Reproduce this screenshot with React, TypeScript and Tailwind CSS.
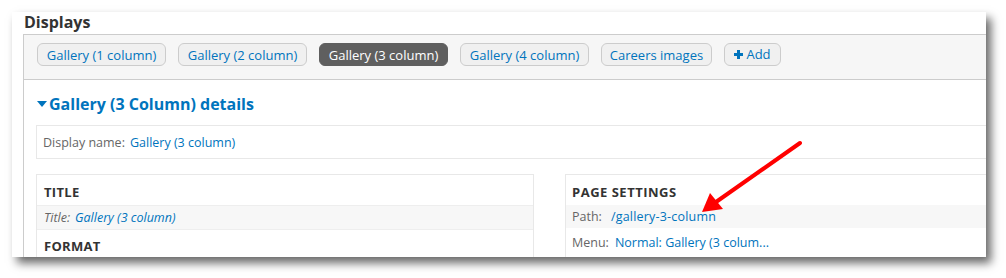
const tabs = [
  { label: "Gallery (1 column)", w: "w-[129px]" },
  { label: "Gallery (2 column)", w: "w-[129px]" },
  { label: "Gallery (3 column)", w: "w-[129px]", active: true },
  { label: "Gallery (4 column)", w: "w-[129px]" },
  { label: "Careers images", w: "w-[111px]" },
];

const font = { fontFamily: '"Open Sans", "Noto Sans", sans-serif' };

export default function App() {
  return (
    <div
      className="relative w-[1006px] h-[278px] overflow-hidden bg-white pl-[12px] pt-[12px]"
      style={font}
    >
      <div className="w-[974px] h-[245px] overflow-hidden bg-white pl-[11px] shadow-[5px_6px_9px_rgba(0,0,0,0.6)]">
        <h2 className="h-[22px] pl-[1px] text-[16px] leading-[20px] font-bold text-[#333]">
          Displays
        </h2>

        <div className="flex h-[46px] items-start gap-[12px] border-y border-l border-[#ccc] bg-[#f6f6f6] pl-[13px] pt-[8px]">
          {tabs.map((t) => (
            <button
              key={t.label}
              className={`${t.w} h-[23px] rounded-[6px] border text-[13px] leading-[20px] ${
                t.active
                  ? "border-[#5f5f5f] bg-[#5f5f5f] text-white"
                  : "border-[#ccc] bg-[#f0f0f0] text-[#0074bd]"
              }`}
            >
              {t.label}
            </button>
          ))}
          <button className="flex w-[57px] h-[23px] items-center justify-center gap-[3px] rounded-[6px] border border-[#ccc] bg-[#f0f0f0] text-[13px] text-[#0074bd]">
            <svg width="9" height="9" viewBox="0 0 9 9">
              <path d="M3 0h3v3h3v3H6v3H3V6H0V3h3z" fill="#0074bd" />
            </svg>
            Add
          </button>
        </div>

        <div className="h-[200px] border-l border-[#ccc] pl-[12px]">
          <div className="flex h-[45px] items-center gap-[2px] pl-[1px] pt-[2px] text-[16px] font-bold text-[#0074bd]">
            <svg width="10" height="6" viewBox="0 0 10 6">
              <path d="M0 0h10L5 6z" fill="#0074bd" />
            </svg>
            Gallery (3 Column) details
          </div>

          <div className="flex h-[34px] items-center border border-r-0 border-[#e8e8e8] pl-[6px] pt-[2px] text-[12.5px] text-[#666]">
            Display name:
            <span className="ml-[5px] text-[#0074bd]">Gallery (3 column)</span>
          </div>

          <div className="mt-[15px] flex gap-[31px]">
            <div className="w-[498px] h-[90px] border border-b-0 border-[#e8e8e8]">
              <div className="h-[30px] pl-[7px] pt-[8px] text-[13px] font-bold leading-[18px] tracking-[0.3px] text-[#333]">
                TITLE
              </div>
              <div className="flex h-[25px] items-center border-y border-[#eee] bg-[#f7f7f7] pl-[7px] pt-[2px] text-[12.5px] italic text-[#666]">
                Title:
                <span className="ml-[5px] text-[#0074bd]">Gallery (3 column)</span>
              </div>
              <div className="pl-[7px] pt-[7px] text-[13px] font-bold leading-[18px] tracking-[0.3px] text-[#333]">
                FORMAT
              </div>
            </div>

            <div className="flex-1 h-[90px] border border-r-0 border-b-0 border-[#e8e8e8]">
              <div className="h-[30px] pl-[6px] pt-[8px] text-[13px] font-bold leading-[18px] tracking-[0.5px] text-[#333]">
                PAGE SETTINGS
              </div>
              <div className="flex h-[23px] items-center bg-[#f7f7f7] pl-[6px] pt-[2px] text-[12.5px] text-[#666]">
                Path:
                <span className="ml-[9px] tracking-[0.2px] text-[#0074bd]">/gallery-3-column</span>
              </div>
              <div className="flex h-[28px] items-center pl-[6px] pt-[2px] text-[12.5px] text-[#666]">
                Menu:
                <span className="ml-[6px] text-[#0074bd]">Normal: Gallery (3 colum...</span>
              </div>
            </div>
          </div>
        </div>
      </div>

      <svg
        className="absolute left-0 top-0 pointer-events-none"
        width="1006"
        height="278"
        viewBox="0 0 1006 278"
      >
        <line x1="800" y1="143" x2="716" y2="202" stroke="#f00" strokeWidth="4" strokeLinecap="round" />
        <path d="M702 212 L710 193 L723 209 Z" fill="#f00" />
      </svg>
    </div>
  );
}
